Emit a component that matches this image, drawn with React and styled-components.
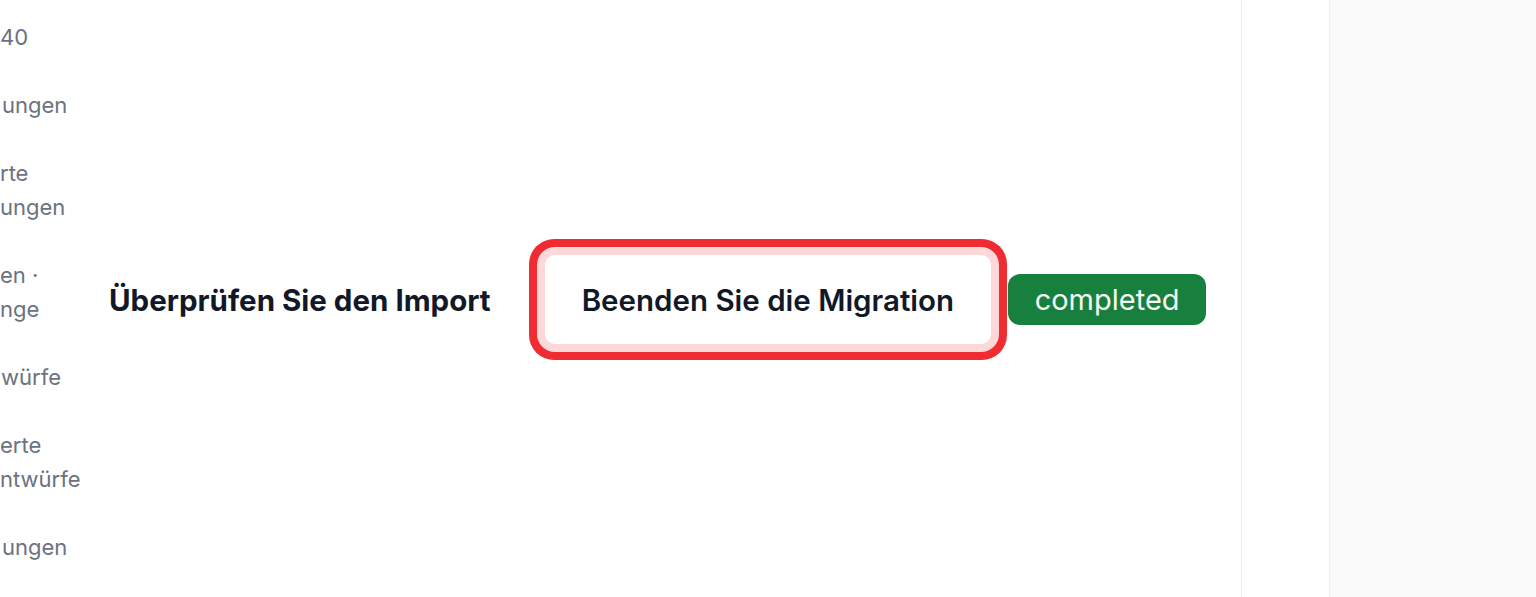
import React from 'react'
import styled, { createGlobalStyle } from 'styled-components'

const GlobalStyle = createGlobalStyle`
  html, body {
    margin: 0;
    padding: 0;
    background: #ffffff;
    overflow: hidden;
  }
  body {
    font-family: Inter, "Noto Sans", "Liberation Sans", sans-serif;
    -webkit-font-smoothing: antialiased;
  }
`

const Page = styled.div`
  display: flex;
  height: 597px;
  width: 1536px;
`

const Sidebar = styled.nav`
  width: 92px;
  flex-shrink: 0;
  overflow: hidden;
  display: flex;
  flex-direction: column;
  gap: 34px;
  padding-top: 20px;
`

const NavItem = styled.div`
  display: flex;
  flex-direction: column;
  margin-left: ${props => props.shift || 0}px;
  font-size: 22px;
  line-height: 34px;
  color: #6b7280;
  white-space: nowrap;
`

const Main = styled.main`
  flex: 1;
  display: flex;
  align-items: center;
  padding-left: 17px;
  border-right: 1px solid #eeeeef;
`

const Step = styled.div`
  display: flex;
  align-items: center;
  gap: 17px;
  margin-top: 2px;
`

const Title = styled.h2`
  margin: 0 37px 0 0;
  font-size: 29.5px;
  font-weight: 700;
  color: #111827;
  white-space: nowrap;
`

const ActionButton = styled.button`
  height: 89px;
  padding: 0 37px;
  border: none;
  border-radius: 10px;
  background: #ffffff;
  font-family: inherit;
  font-size: 29.5px;
  font-weight: 600;
  color: #111827;
  white-space: nowrap;
  box-shadow: 0 0 0 8px #fdd8d8, 0 0 0 16px #ee2c32;
`

const Badge = styled.span`
  display: inline-flex;
  align-items: center;
  justify-content: center;
  width: 198px;
  height: 51px;
  border-radius: 12px;
  background: #17803e;
  color: #f4fbf5;
  font-size: 29px;
  font-weight: 400;
`

const Gutter = styled.div`
  width: 87px;
  flex-shrink: 0;
`

const SidePanel = styled.aside`
  width: 206px;
  flex-shrink: 0;
  background: #fafafa;
  border-left: 1px solid #f0f0f0;
`

const navItems = [
  { lines: ['40'] },
  { lines: ['ungen'], shift: 2 },
  { lines: ['rte', 'ungen'] },
  { lines: ['en ·', 'nge'] },
  { lines: ['würfe'], shift: 1 },
  { lines: ['erte', 'ntwürfe'] },
  { lines: ['ungen'], shift: 2 },
]

export default function App() {
  return (
    <>
      <GlobalStyle />
      <Page>
        <Sidebar>
          {navItems.map((item, i) => (
            <NavItem key={i} shift={item.shift}>
              {item.lines.map(line => (
                <span key={line}>{line}</span>
              ))}
            </NavItem>
          ))}
        </Sidebar>
        <Main>
          <Step>
            <Title>Überprüfen Sie den Import</Title>
            <ActionButton type="button">Beenden Sie die Migration</ActionButton>
            <Badge>completed</Badge>
          </Step>
        </Main>
        <Gutter />
        <SidePanel />
      </Page>
    </>
  )
}
